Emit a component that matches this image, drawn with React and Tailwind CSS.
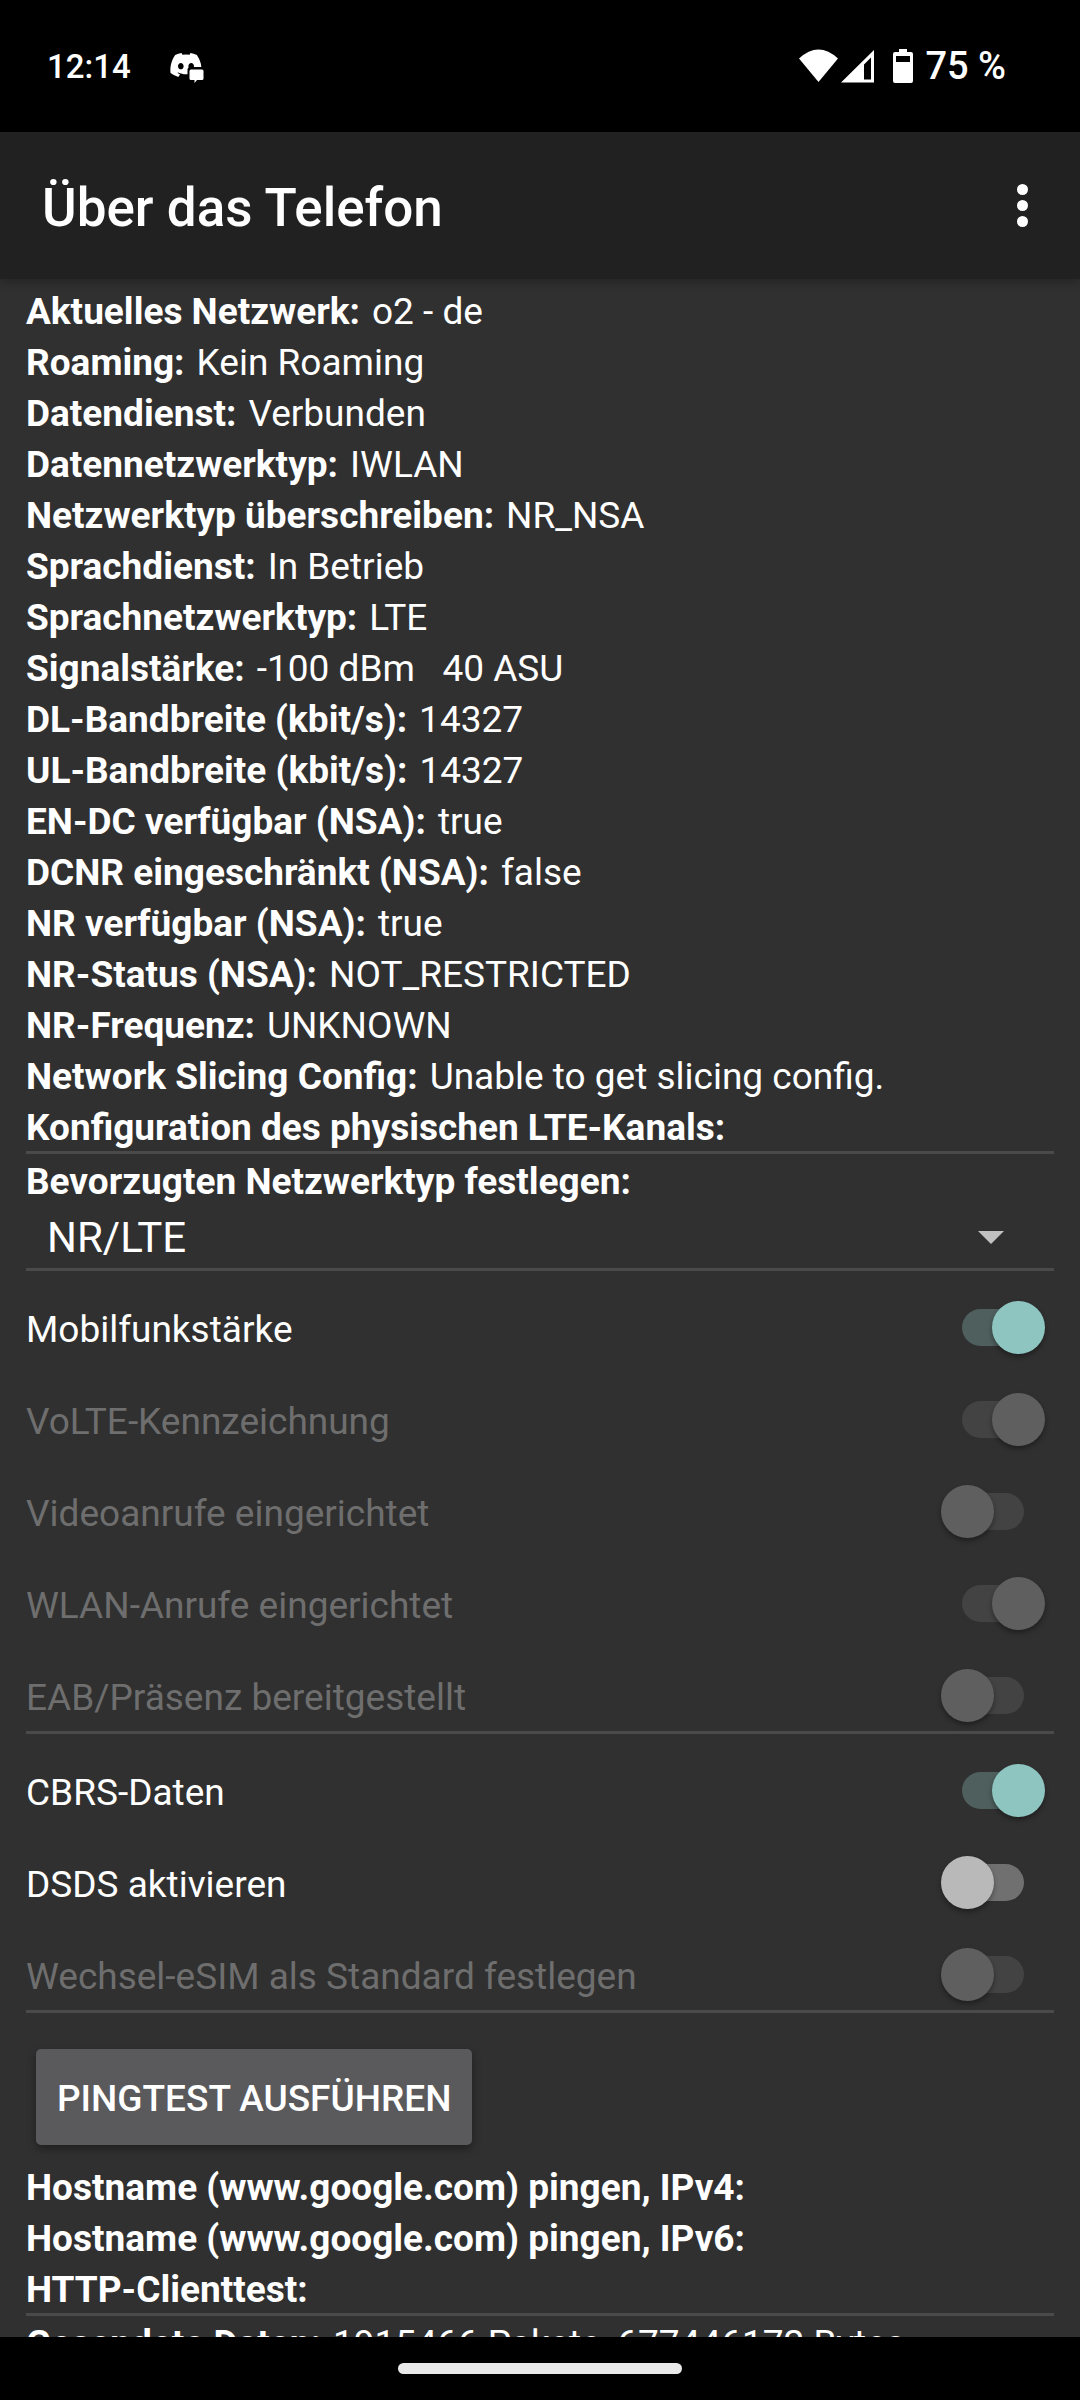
import { useState } from 'react'
import { FaDiscord } from 'react-icons/fa'

const INFO = [
  ['Aktuelles Netzwerk:', 'o2 - de'],
  ['Roaming:', 'Kein Roaming'],
  ['Datendienst:', 'Verbunden'],
  ['Datennetzwerktyp:', 'IWLAN'],
  ['Netzwerktyp überschreiben:', 'NR_NSA'],
  ['Sprachdienst:', 'In Betrieb'],
  ['Sprachnetzwerktyp:', 'LTE'],
  ['Signalstärke:', '-100 dBm   40 ASU'],
  ['DL-Bandbreite (kbit/s):', '14327'],
  ['UL-Bandbreite (kbit/s):', '14327'],
  ['EN-DC verfügbar (NSA):', 'true'],
  ['DCNR eingeschränkt (NSA):', 'false'],
  ['NR verfügbar (NSA):', 'true'],
  ['NR-Status (NSA):', 'NOT_RESTRICTED'],
  ['NR-Frequenz:', 'UNKNOWN'],
  ['Network Slicing Config:', 'Unable to get slicing config.'],
  ['Konfiguration des physischen LTE-Kanals:', ''],
]

const PING = [
  ['Hostname (www.google.com) pingen, IPv4:', ''],
  ['Hostname (www.google.com) pingen, IPv6:', ''],
  ['HTTP-Clienttest:', ''],
]

const TRAFFIC = [
  ['Gesendete Daten:', '1915466 Pakete, 677446172 Bytes'],
]

const RADIO_SWITCHES = [
  { id: 'radio', label: 'Mobilfunkstärke', on: true },
  { id: 'volte', label: 'VoLTE-Kennzeichnung', on: true, disabled: true },
  { id: 'video', label: 'Videoanrufe eingerichtet', on: false, disabled: true },
  { id: 'wfc', label: 'WLAN-Anrufe eingerichtet', on: true, disabled: true },
  { id: 'eab', label: 'EAB/Präsenz bereitgestellt', on: false, disabled: true },
]

const SIM_SWITCHES = [
  { id: 'cbrs', label: 'CBRS-Daten', on: true },
  { id: 'dsds', label: 'DSDS aktivieren', on: false },
  { id: 'esim', label: 'Wechsel-eSIM als Standard festlegen', on: false, disabled: true },
]

const NETWORK_TYPES = ['NR/LTE', 'LTE', 'NR']

function InfoList({ rows }) {
  return (
    <dl>
      {rows.map(([label, value]) => (
        <div key={label} className="flex gap-3 pt-[4px] leading-[47px] whitespace-pre">
          <dt className="font-bold">{label}</dt>
          <dd>{value}</dd>
        </div>
      ))}
    </dl>
  )
}

function Divider() {
  return <hr className="h-[3px] border-0 bg-[#4a4a4a]" />
}

function SwitchRow({ id, label, on, disabled }) {
  const [checked, setChecked] = useState(on)

  return (
    <div className="flex items-center justify-between pt-[30px] pb-[9px] pr-[9px]">
      <label
        htmlFor={id}
        className={`pt-[4px] leading-[47px] ${disabled ? 'text-[#6e6e6e]' : 'text-white'}`}
      >
        {label}
      </label>
      <input
        id={id}
        type="checkbox"
        role="switch"
        checked={checked}
        disabled={disabled}
        onChange={e => setChecked(e.target.checked)}
        className="relative h-[53px] w-[104px] shrink-0 appearance-none
          before:absolute before:top-2 before:left-[21px] before:h-[37px] before:w-[62px] before:rounded-full before:bg-[#707070]
          checked:before:bg-[#4e5f5d] disabled:before:bg-[#434343]
          after:absolute after:top-0 after:left-0 after:size-[53px] after:rounded-full after:bg-[#b9b9b9] after:shadow-[0_3px_5px_rgba(0,0,0,0.35)]
          checked:after:left-[51px] checked:after:bg-[#8ec5c0] disabled:after:bg-[#5f5f5f]"
      />
    </div>
  )
}

function StatusBar() {
  return (
    <div className="flex h-[132px] shrink-0 items-center justify-between bg-black pr-[74px] pl-[47px] leading-none font-medium">
      <div className="flex items-center gap-[38px] text-[33px]">
        <span>12:14</span>
        {/* Discord notification with message badge */}
        <span className="relative block size-[36px]">
          <FaDiscord className="size-[34px]" />
          <svg viewBox="0 0 36 36" className="absolute inset-0">
            <path d="M18.500 22a3 3 0 0 1 3-3H36v17H18.500z" fill="#000" />
            <path d="M22 21.500h11a1.500 1.500 0 0 1 1.500 1.500v7.500a1.500 1.500 0 0 1-1.500 1.500h-5l-2.500 3v-3H22a1.500 1.500 0 0 1-1.500-1.500V23a1.500 1.500 0 0 1 1.500-1.500z" fill="#fff" />
          </svg>
        </span>
      </div>
      <div className="flex items-center text-[38px]">
        <svg width="39" height="34" viewBox="0 0 39 34" fill="#fff">
          <path d="M0 9.500Q19.500-8.500 39 9.500L19.500 33z" />
        </svg>
        <svg width="33" height="34" viewBox="0 0 33 34" fill="#fff" className="ml-[3px]">
          <path d="M33 1v32.500H0zM30 8.500l-7 7V30.500h7z" fillRule="evenodd" />
        </svg>
        <svg width="20" height="34" viewBox="0 0 20 34" fill="#fff" className="ml-[19px]">
          <path d="M6 0h8v3h4a2 2 0 0 1 2 2v27a2 2 0 0 1-2 2H2a2 2 0 0 1-2-2V5a2 2 0 0 1 2-2h4zM3 7v6h14V7z" fillRule="evenodd" />
        </svg>
        <span className="ml-3">75 %</span>
      </div>
    </div>
  )
}

export default function App() {
  const [networkType, setNetworkType] = useState('NR/LTE')

  return (
    <div className="flex h-screen flex-col bg-[#303030] font-['Roboto',sans-serif] text-[37px] text-white">
      <StatusBar />

      <header className="z-10 flex h-[147px] shrink-0 items-center justify-between bg-[#212121] pr-[37px] pl-[42px] shadow-[0_2px_10px_rgba(0,0,0,0.3)]">
        <h1 className="pt-[4px] text-[53px] leading-[60px] font-medium">Über das Telefon</h1>
        <button type="button" aria-label="Weitere Optionen" className="flex w-[41px] flex-col items-center gap-[5px]">
          <span className="size-[11px] rounded-full bg-white" />
          <span className="size-[11px] rounded-full bg-white" />
          <span className="size-[11px] rounded-full bg-white" />
        </button>
      </header>

      <main className="min-h-0 flex-1 overflow-hidden px-[26px] pt-[5px]">
        <InfoList rows={INFO} />
        <Divider />

        <label htmlFor="network-type" className="block pt-[4px] leading-[47px] font-bold">
          Bevorzugten Netzwerktyp festlegen:
        </label>
        <div className="relative">
          <select
            id="network-type"
            value={networkType}
            onChange={e => setNetworkType(e.target.value)}
            className="block h-[63px] w-full appearance-none bg-transparent pt-px pl-[21px] text-[42px]"
          >
            {NETWORK_TYPES.map(type => (
              <option key={type} className="text-black">{type}</option>
            ))}
          </select>
          <svg width="26" height="13" viewBox="0 0 26 13" className="pointer-events-none absolute top-[26px] right-[50px]">
            <path d="M0 0h26L13 13z" fill="#c1c1c1" />
          </svg>
        </div>
        <Divider />

        {RADIO_SWITCHES.map(item => <SwitchRow key={item.id} {...item} />)}
        <Divider />
        {SIM_SWITCHES.map(item => <SwitchRow key={item.id} {...item} />)}
        <Divider />

        <button
          type="button"
          className="mx-[10px] mt-[36px] mb-[15px] block h-[96px] rounded-[5px] bg-[#5a5a5c] px-[21px] pt-[3px] font-medium shadow-[0_4px_8px_rgba(0,0,0,0.35)]"
        >
          PINGTEST AUSFÜHREN
        </button>

        <InfoList rows={PING} />
        <Divider />
        <InfoList rows={TRAFFIC} />
      </main>

      {/* Gesture bar */}
      <footer className="flex h-[63px] shrink-0 items-center justify-center bg-black">
        <span className="h-[11px] w-[284px] rounded-full bg-[#e9e9e9]" />
      </footer>
    </div>
  )
}
